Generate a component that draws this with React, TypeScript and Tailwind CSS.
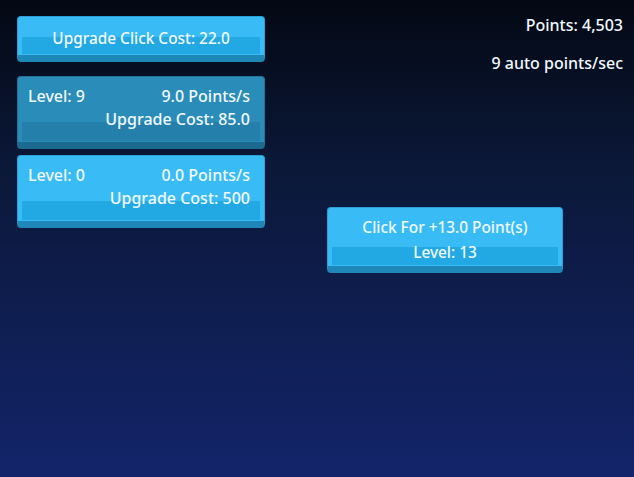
import React from 'react';

const font = { fontFamily: '"Noto Sans", "Open Sans", sans-serif' };

function Stripe({ dark, className }: { dark?: boolean; className: string }) {
  return (
    <div
      className={`absolute left-[4px] right-[4px] ${className} ${
        dark ? 'bg-[#2480ab]' : 'bg-[#22a8e2]'
      }`}
    />
  );
}

function UpgradeCard({ level, rate, cost, dark }: { level: string; rate: string; cost: string; dark?: boolean }) {
  return (
    <div
      className={`relative h-[73px] rounded-[4px] border border-b-[7px] ${
        dark
          ? 'bg-[#2a8cb9] border-[#22739c] border-b-[#1c6a90]'
          : 'bg-[#39bcf5] border-[#2aa0d6] border-b-[#1f86b8]'
      }`}
    >
      <Stripe dark={dark} className="top-[45px] bottom-[1px]" />
      <div className="relative flex flex-col pl-[10px] pr-[14px] pt-[9px]">
        <div className="flex items-center justify-between leading-[20px]">
          <span>{level}</span>
          <span>{rate}</span>
        </div>
        <div className="mt-[3px] text-right leading-[20px]">{cost}</div>
      </div>
    </div>
  );
}

export default function App() {
  return (
    <div
      style={font}
      className="flex h-[477px] w-[634px] overflow-hidden whitespace-nowrap bg-[linear-gradient(180deg,#030813_0%,#0b1838_35%,#13246a_100%)] text-[16px] font-medium text-[#f2f9ff]"
    >
      {/* Left column: upgrades */}
      <div className="ml-[17px] mt-[16px] flex w-[248px] shrink-0 flex-col">
        <div className="relative h-[46px] rounded-[4px] border border-b-[7px] border-[#2aa0d6] border-b-[#1f86b8] bg-[#39bcf5]">
          <Stripe className="top-[20px] bottom-[1px]" />
          <div className="relative pt-[13px] text-center text-[15.4px] leading-[18px]">Upgrade Click Cost: 22.0</div>
        </div>

        <div className="mt-[14px] flex flex-col gap-[6px]">
          <UpgradeCard level="Level: 9" rate="9.0 Points/s" cost="Upgrade Cost: 85.0" dark />
          <UpgradeCard level="Level: 0" rate="0.0 Points/s" cost="Upgrade Cost: 500" />
        </div>
      </div>

      {/* Right side: stats and main click button */}
      <div className="flex flex-1 flex-col">
        <div className="mr-[11px] mt-[15px] flex flex-col items-end leading-[20px]">
          <span>Points: 4,503</span>
          <span className="mt-[18px]">9 auto points/sec</span>
        </div>

        <div className="ml-[62px] mt-[134px]">
          <div className="relative h-[66px] w-[236px] rounded-[4px] border border-b-[7px] border-[#2aa0d6] border-b-[#1f86b8] bg-[#39bcf5]">
            <Stripe className="top-[39px] bottom-[1px]" />
            <div className="relative flex flex-col items-center pt-[10px] text-[15.4px] leading-[20px]">
              <span>Click For +13.0 Point(s)</span>
              <span className="mt-[5px]">Level: 13</span>
            </div>
          </div>
        </div>
      </div>
    </div>
  );
}
